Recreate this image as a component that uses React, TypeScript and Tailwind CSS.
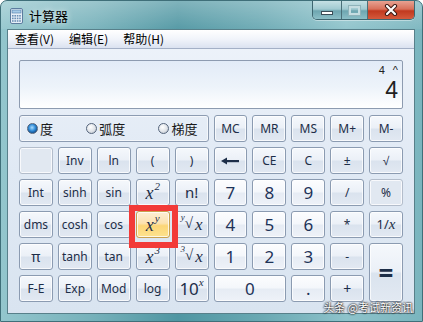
import clsx from 'clsx';
import React from 'react';

type Variant = 'fn' | 'num' | 'off' | 'hot';

// button skins, Win7 calc style
const skin: Record<Variant, string> = {
  fn: 'border-[#8b9bb1] bg-[linear-gradient(180deg,#f5f8fc_0%,#ebf0f7_48%,#dae3ee_52%,#e2e9f2_100%)] text-[#1d2e48]',
  num: 'border-[#8b9bb1] bg-[linear-gradient(180deg,#fcfdfe_0%,#f4f7fb_48%,#e6ecf4_52%,#eef2f8_100%)] text-[#1e3358]',
  off: 'border-[#b3bdcb] bg-[#e1e8f1] text-[#1d2e48]',
  hot: 'border-[#c9a14f] bg-[linear-gradient(180deg,#fdeed5_0%,#fce2b0_45%,#fcd677_55%,#fde28e_100%)] text-[#1d2e48]',
};

const sans = "font-['Noto_Sans',sans-serif]";
const serif = "font-['Liberation_Serif',serif]";
const cjk = "font-['Noto_Sans_CJK_SC',sans-serif]";

function Btn({
  v = 'fn',
  className,
  children,
}: React.PropsWithChildren<{ v?: Variant; className?: string }>) {
  return (
    <div
      className={clsx(
        'flex items-center justify-center rounded-[3px] border leading-none shadow-[inset_0_0_0_1px_rgba(255,255,255,0.75)]',
        skin[v],
        v === 'num' ? 'text-[17px]' : 'text-[12px]',
        sans,
        className,
      )}
    >
      {children}
    </div>
  );
}

function Pow({ b, e }: { b: string; e: string }) {
  return (
    <span className={clsx(serif, 'flex items-start italic')}>
      <span className="text-[18px]">{b}</span>
      <span className="-mt-[3px] ml-[1px] text-[11px]">{e}</span>
    </span>
  );
}

function Root({ i }: { i: string }) {
  return (
    <span className={clsx(serif, 'flex items-start')}>
      <span className="-mt-[3px] text-[9px] italic">{i}</span>
      <span className="text-[15px]">√</span>
      <span className="ml-[2px] text-[17px] italic">x</span>
    </span>
  );
}

function Radio({ on, label }: { on?: boolean; label: string }) {
  return (
    <div className="flex items-center gap-[2px]">
      <span
        className={clsx(
          'h-[11px] w-[11px] rounded-full border border-[#55657c]',
          on
            ? 'bg-[radial-gradient(circle_at_45%_40%,#a9dcff_0%,#2f8ad6_45%,#0f4f92_75%,#f2f4f7_80%)]'
            : 'bg-[radial-gradient(circle_at_40%_35%,#ffffff_0%,#dfe3e8_55%,#c3c9d1_80%)]',
        )}
      />
      <span className={clsx(cjk, 'text-[13px] text-[#1a1a1a]')}>{label}</span>
    </div>
  );
}

function CalcIcon() {
  const keys = [];
  for (let r = 0; r < 3; r++)
    for (let c = 0; c < 4; c++)
      keys.push(<rect key={`${r}-${c}`} x={2 + c * 2.4} y={7 + r * 2.6} width="1.6" height="1.6" fill="#6b8fb5" />);
  return (
    <svg width="13" height="16" viewBox="0 0 13 16">
      <rect x="0.5" y="0.5" width="12" height="15" rx="1.5" fill="#e6eff8" stroke="#5d7c9e" />
      <rect x="2" y="2" width="9" height="3" fill="#a6cbe8" stroke="#4f7aa6" strokeWidth="0.6" />
      {keys}
    </svg>
  );
}

export default function App() {
  return (
    <div className="relative flex h-[322px] w-[423px] flex-col overflow-hidden rounded-t-[7px] border border-[#3f6f79] bg-[linear-gradient(90deg,#93c6cd_0%,#76b1ba_22%,#4f96a2_42%,#6aa9b3_62%,#8ec3cb_82%,#7ab5be_100%)]">
      {/* title bar */}
      <div className="flex h-[28px] justify-between bg-[linear-gradient(180deg,rgba(255,255,255,0.28),rgba(255,255,255,0.05))] pl-[9px] pr-[7px]">
        <div className="flex items-center gap-[6px] pt-[1px]">
          <CalcIcon />
          <span className={clsx(cjk, 'text-[13px] text-black [text-shadow:0_0_6px_rgba(255,255,255,0.9)]')}>计算器</span>
        </div>
        <div className="flex h-[19px] overflow-hidden rounded-b-[5px] border border-t-0 border-[#3e6670] shadow-[0_1px_0_rgba(255,255,255,0.4)]">
          <div className="flex w-[29px] items-end justify-center border-r border-[#4b7079] bg-[linear-gradient(180deg,#c5e0e4_0%,#a1cad1_45%,#6ea6b0_55%,#8cbfc7_100%)] pb-[4px]">
            <span className="h-[4px] w-[12px] border border-[#3a4d57] bg-white" />
          </div>
          <div className="flex w-[26px] items-center justify-center border-r border-[#4b7079] bg-[linear-gradient(180deg,#c5e0e4_0%,#a1cad1_45%,#6ea6b0_55%,#8cbfc7_100%)]">
            <span className="h-[9px] w-[11px] border-2 border-[#c6dde1] shadow-[0_0_0_1px_#8fb3ba]" />
          </div>
          <div className="flex w-[46px] items-center justify-center bg-[linear-gradient(180deg,#e7a292_0%,#d8705a_45%,#c1391f_55%,#d45a3c_100%)]">
            <svg width="16" height="12" viewBox="0 0 16 12">
              <path d="M4 2 L12 10 M12 2 L4 10" stroke="#3d1a14" strokeWidth="4.2" strokeLinecap="round" />
              <path d="M4 2 L12 10 M12 2 L4 10" stroke="#ffffff" strokeWidth="2.2" strokeLinecap="round" />
            </svg>
          </div>
        </div>
      </div>

      {/* client */}
      <div className="ml-[6px] mr-[7px] h-[285px] border border-[#58808a] bg-[linear-gradient(180deg,#eef3fa_0%,#e0e9f4_50%,#d9e4f0_100%)]">
        <div className={clsx(cjk, 'flex h-[19px] items-center gap-[15px] border-b border-[#a4b0c6] bg-[linear-gradient(180deg,#ffffff_0%,#f1f4fa_50%,#dbe2f0_100%)] pl-[7px] text-[12px] text-black')}>
          <span>查看(V)</span>
          <span>编辑(E)</span>
          <span>帮助(H)</span>
        </div>

        <div className="px-[11px] pt-[11px]">
          {/* display */}
          <div className="flex h-[49px] flex-col items-end rounded-[2px] border border-[#8d9bb0] bg-[linear-gradient(180deg,#e2ebf7_0%,#edf3fa_55%,#ffffff_100%)] pr-[4px] font-['Liberation_Sans',sans-serif] text-[#222]">
            <div className="mt-[3px] flex gap-[8px] text-[11px] leading-[12px]">
              <span>4</span>
              <span>^</span>
            </div>
            <div className="mt-[1px] text-[23px] leading-[26px]">4</div>
          </div>

          {/* keys */}
          <div className="mt-[6px] grid grid-cols-10 grid-rows-[repeat(6,27px)] gap-[5px]">
            <div className="col-span-5 flex items-center justify-between rounded-[3px] border border-[#8d9cb2] pl-[7px] pr-[10px] shadow-[inset_0_0_0_1px_rgba(255,255,255,0.6)]">
              <Radio on label="度" />
              <Radio label="弧度" />
              <Radio label="梯度" />
            </div>
            <Btn>MC</Btn>
            <Btn>MR</Btn>
            <Btn>MS</Btn>
            <Btn>M+</Btn>
            <Btn>M-</Btn>

            <Btn v="off" />
            <Btn>Inv</Btn>
            <Btn>ln</Btn>
            <Btn>(</Btn>
            <Btn>)</Btn>
            <Btn>
              <svg width="18" height="8" viewBox="0 0 18 8">
                <path d="M0 4 L6 0.5 L6 7.5 Z" fill="#1d2e48" />
                <rect x="5" y="3" width="13" height="2.2" fill="#1d2e48" />
              </svg>
            </Btn>
            <Btn>CE</Btn>
            <Btn>C</Btn>
            <Btn>±</Btn>
            <Btn>√</Btn>

            <Btn>Int</Btn>
            <Btn>sinh</Btn>
            <Btn>sin</Btn>
            <Btn><Pow b="x" e="2" /></Btn>
            <Btn className="text-[15px]">n!</Btn>
            <Btn v="num">7</Btn>
            <Btn v="num">8</Btn>
            <Btn v="num">9</Btn>
            <Btn>/</Btn>
            <Btn v="off">%</Btn>

            <Btn>dms</Btn>
            <Btn>cosh</Btn>
            <Btn>cos</Btn>
            <div className="relative">
              <Btn v="hot" className="h-full w-full"><Pow b="x" e="y" /></Btn>
              <div className="pointer-events-none absolute -top-[6px] -right-[8px] -bottom-[10px] -left-[7px] border-[6px] border-[#f23a38]" />
            </div>
            <Btn><Root i="y" /></Btn>
            <Btn v="num">4</Btn>
            <Btn v="num">5</Btn>
            <Btn v="num">6</Btn>
            <Btn>*</Btn>
            <Btn>
              <span className="flex items-center">
                <span className="text-[13px]">1/</span>
                <span className={clsx(serif, 'text-[15px] italic')}>x</span>
              </span>
            </Btn>

            <Btn className="text-[14px]">π</Btn>
            <Btn>tanh</Btn>
            <Btn>tan</Btn>
            <Btn><Pow b="x" e="3" /></Btn>
            <Btn><Root i="3" /></Btn>
            <Btn v="num">1</Btn>
            <Btn v="num">2</Btn>
            <Btn v="num">3</Btn>
            <Btn>-</Btn>
            <Btn className="row-span-2 text-[26px] font-bold">=</Btn>

            <Btn>F-E</Btn>
            <Btn>Exp</Btn>
            <Btn>Mod</Btn>
            <Btn>log</Btn>
            <Btn>
              <span className="flex items-start">
                <span className="text-[17px]">10</span>
                <span className={clsx(serif, '-mt-[3px] text-[11px] italic')}>x</span>
              </span>
            </Btn>
            <Btn v="num" className="col-span-2">0</Btn>
            <Btn v="num">.</Btn>
            <Btn className="text-[14px]">+</Btn>
          </div>
        </div>
      </div>

      {/* watermark */}
      <div className={clsx(cjk, 'absolute right-[9px] bottom-[8px] text-[11px] leading-none text-white [text-shadow:0_0_2px_#000,0_0_2px_#000]')}>
        头条 @考试新资讯
      </div>
    </div>
  );
}
